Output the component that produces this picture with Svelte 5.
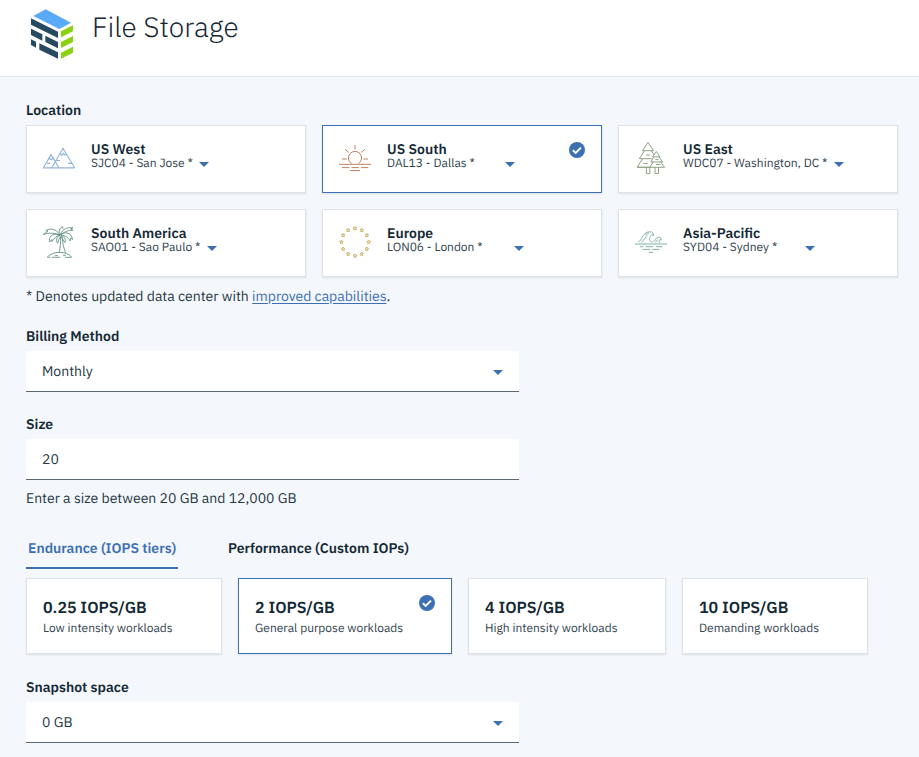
<script>
  const locations = [
    { name: 'US West', dc: 'SJC04 - San Jose *', icon: 'mountains', width: 108 },
    { name: 'US South', dc: 'DAL13 - Dallas *', icon: 'sun', width: 118, selected: true },
    { name: 'US East', dc: 'WDC07 - Washington, DC *', icon: 'trees', width: 151 },
    { name: 'South America', dc: 'SAO01 - Sao Paulo *', icon: 'palm', width: 116 },
    { name: 'Europe', dc: 'LON06 - London *', icon: 'stars', width: 127 },
    { name: 'Asia-Pacific', dc: 'SYD04 - Sydney *', icon: 'wave', width: 122 }
  ];
  const tiers = [
    { name: '0.25 IOPS/GB', text: 'Low intensity workloads', width: 196 },
    { name: '2 IOPS/GB', text: 'General purpose workloads', width: 214, selected: true },
    { name: '4 IOPS/GB', text: 'High intensity workloads', width: 198 },
    { name: '10 IOPS/GB', text: 'Demanding workloads', width: 186 }
  ];
  const stars = Array.from({ length: 12 }, (_, i) => {
    const a = (i * Math.PI) / 6;
    return { x: 16 + 13.7 * Math.sin(a), y: 15 - 13.7 * Math.cos(a) };
  });
</script>

{#snippet caret()}
  <svg class="caret" width="10" height="5" viewBox="0 0 10 5"><path d="M0 0h10L5 5z" /></svg>
{/snippet}

{#snippet check()}
  <svg class="check" width="16" height="16" viewBox="0 0 16 16">
    <circle cx="8" cy="8" r="8" />
    <path d="M3.9 8.2l2.8 2.7 5.3-5.3" />
  </svg>
{/snippet}

<div class="page">
  <header>
    <svg class="logo" width="45" height="52" viewBox="30 24 135 156">
      <path fill="#5aaafa" d="M77 28l76 40-35 19-78-39z" />
      <path fill="#264a60" d="M33 55l81 40v19L33 74zM33 86l34 17v19l-34-17zM76 107l38 19v19l-38-19zM33 118l15 7v18l-15-8zM58 130l56 27v19l-56-27z" />
      <path fill="#8cd211" d="M123 94l36-18v18l-36 18zM123 126l36-18v18l-36 18zM123 158l36-18v18l-36 18z" />
    </svg>
    <h1>File Storage</h1>
  </header>

  <main>
    <h2>Location</h2>
    <div class="locations">
      {#each locations as l}
        <div class="card location" class:selected={l.selected}>
          <svg class="icon {l.icon}" width="32" height="32" viewBox="0 0 32 32">
            {#if l.icon === 'mountains'}
              <path d="M.5 24.5L8 11.6l4 6.1M8.9 24.5L20 5.3l11.5 19.2M8 11.6l7.8 12.9M0 24.8h32M5.3 16.5l1.7-1.3 1.3 1.6 1.5-1.5 1.2.8M17.2 10.3l1.6 2 1.5-2 1.6 1.7 1.6-1M4 20.3h3M13 17.5h4M25 20.3h3.5" />
            {:else if l.icon === 'sun'}
              <path d="M0 21.3h32M3 24.6h7.3M12.5 24.6h7.3M22 24.6h7.3M11 27.6h10M16 2v4.5M6.2 6.4l3.5 3M25.8 6.4l-3.5 3M3 16h4.7M24.3 16H29" />
              <path d="M12.5 20.6a6.6 6.6 0 1 1 7 0" />
            {:else if l.icon === 'trees'}
              <path d="M13-.5L7.4 7.7h11.2zM9.6 7.7l-5.3 8h12.5M16.4 7.7l2.4 4M7.5 15.7L2.2 24.3h13.2M11.4 24.3v6.3h3.4v-6.3M2.2 24.3h27.4l-4.4-6M21.3 8.5l-3.7 5.4h7.2zM18.7 14l-2.9 5h11.8L24 14M18.2 19l-3.3 5.1M20 24.3v6.1h3.5v-6.1M11 12h4M8.5 20.5h4M20.5 16.6h3M21 21.5h4.5" />
            {:else if l.icon === 'palm'}
              <path d="M17.5 9.8c.3 5 .1 10-1.3 15.2M19.2 10c.4 6 1.4 11 3.4 15.7M17 8C13.5 1.5 6 .8 2.8 3.7L5 4.2.3 7.5C6 5.4 12 6 17 8zM17 8C9 5.5 5 10 6.8 15c1-1 1.4-1.8 2-2.5l.2 2C11 11.5 13 9 17 8zM17 8c-4 2-4 6-2.3 8.3C15.5 13 16.5 11 17.6 8.6M17.5 7.5C15 4.5 16.5 1 19.5-.3l.5 2M17.5 7.5C20 1 25 .3 30 .8L27.6 2l2.3 1.2C25 3 21.5 5 17.5 7.5zM17.7 8c4-4 11-2.5 11.8 4.5l-2-1.5-.3 3C25 10 22 8.5 17.7 8zM18 8.5c4 1 4.8 4 4 7-1.5-2-3-4-4-7M4.3 30.1c5-6.3 19.4-6.3 24.4 0M4.3 30.3h3M9 30.3h8M22 30.3h6.7M12 28.6h3M20 28.3h3" />
            {:else if l.icon === 'stars'}
              {#each stars as s}
                <path transform="translate({s.x} {s.y})" d="M0-1.8L.55-.6 1.8-.5.8.4 1.1 1.6 0 1-1.1 1.6-.8.4-1.8-.5-.55-.6z" />
              {/each}
            {:else}
              <path d="M0 17h32M5 19.7h3.5M10.7 19.7h7.6M21 19.7h6.5M7.5 22.4h7.5M17.3 22.4h7M13.7 25.3h4.5M3.2 15C7 14 7.5 4.8 15 4.8c2.5 0 3.8 1.7 3.5 4-1.8-2-3.2-.8-3 .8-2 1.4-1.2 5 2 5.8M6.5 15c3-1.5 4-5.5 6-7.2M10.5 7.5c1.3-1 2.3-1.2 3.5-1.2M18.2 14.8c2.3-.3 2-4.6 5.5-4.6 2 0 2.8 1.5 2.6 3-1-1-2-.7-2 .3-1 .5-.5 1.8.6 2.2M20.5 15.3c1.2-.8 1.2-1.8 2-2.8" />
            {/if}
          </svg>
          <div class="details">
            <strong>{l.name}</strong>
            <div class="dc"><span style="width: {l.width}px">{l.dc}</span>{@render caret()}</div>
          </div>
          {#if l.selected}{@render check()}{/if}
        </div>
      {/each}
    </div>
    <p class="note">* Denotes updated data center with <a href="#capabilities">improved capabilities</a>.</p>

    <h2 class="billing">Billing Method</h2>
    <div class="field"><span>Monthly</span>{@render caret()}</div>

    <h2 class="size">Size</h2>
    <div class="field"><span>20</span></div>
    <p class="helper">Enter a size between 20 GB and 12,000 GB</p>

    <nav>
      <button class="active">Endurance (IOPS tiers)</button>
      <button class="performance">Performance (Custom IOPs)</button>
    </nav>
    <div class="tiers">
      {#each tiers as t}
        <div class="card tier" class:selected={t.selected} style="width: {t.width}px">
          <div class="tier-text">
            <strong>{t.name}</strong>
            <p>{t.text}</p>
          </div>
          {#if t.selected}{@render check()}{/if}
        </div>
      {/each}
    </div>

    <h2 class="snapshot">Snapshot space</h2>
    <div class="field"><span>0 GB</span>{@render caret()}</div>
  </main>
</div>

<style>
  :global(body) { margin: 0; background: #f4f7fb; }
  .page {
    height: 757px;
    overflow: hidden;
    box-sizing: border-box;
    background: #f4f7fb;
    color: #152935;
    font-family: 'IBM Plex Sans', Roboto, 'Liberation Sans', sans-serif;
    font-size: 14px;
    white-space: nowrap;
    text-rendering: geometricPrecision;
  }
  * { box-sizing: border-box; }
  header {
    height: 77px;
    display: flex;
    align-items: flex-start;
    padding: 8px 30px 0;
    background: #fff;
    border-bottom: 1px solid #dfe6eb;
  }
  h1 { margin: 0 0 0 17px; font-size: 28px; line-height: 38px; font-weight: 300; }
  main { padding: 24px 21px 0 26px; }
  h2 { margin: 0 0 6px; font-size: 14px; line-height: 18px; font-weight: 600; }
  p { margin: 0; }
  .locations { display: grid; grid-template-columns: repeat(3, 280px); gap: 16px; }
  .card {
    display: flex;
    background: #fff;
    border: 1px solid #dfe3e6;
    box-shadow: 0 1px 2px rgba(0, 0, 0, 0.1);
  }
  .card.selected { border-color: #3d70b2; }
  .location { height: 68px; padding: 16px; align-items: flex-start; }
  .icon { flex: none; margin-top: 1px; overflow: visible; fill: none; stroke-width: 1; }
  .mountains { stroke: #94b5da; stroke-width: 1.15; }
  .sun { stroke: #c2805f; }
  .trees { stroke: #8fa284; }
  .palm { stroke: #5d8c83; stroke-width: 0.85; }
  .stars { stroke: #c9b062; }
  .wave { stroke: #86afa8; }
  .details { margin-left: 16px; }
  .details strong { display: block; line-height: 15px; font-weight: 600; }
  .dc { display: flex; align-items: center; height: 14px; font-size: 12px; line-height: 16px; font-weight: 400; }
  .dc span { color: #33444f; }
  .caret { flex: none; fill: #3d70b2; }
  .dc .caret { margin-top: 1px; }
  .check { flex: none; margin-left: auto; }
  .check circle { fill: #3d70b2; }
  .check path { fill: none; stroke: #fff; stroke-width: 2; }
  .note { margin-top: 10px; line-height: 18px; color: #253843; }
  a { color: #3d70b2; text-decoration: underline; text-underline-offset: 2px; }
  .billing { margin-top: 22px; }
  .field {
    display: flex;
    align-items: center;
    justify-content: space-between;
    width: 493px;
    height: 41px;
    padding: 0 16px;
    background: #fff;
    border-bottom: 1px solid #5a6872;
    color: #253843;
  }
  .field .caret { margin-top: 2px; }
  .size { margin-top: 23px; }
  .helper { margin-top: 9px; line-height: 18px; color: #253843; }
  nav { display: flex; height: 42px; margin-top: 20px; }
  button {
    padding: 0 2px;
    border: 0;
    background: none;
    color: #152935;
    font: 600 14px/18px 'IBM Plex Sans', Roboto, 'Liberation Sans', sans-serif;
    text-rendering: inherit;
    text-align: left;
  }
  .active { width: 152px; border-bottom: 2px solid #3d70b2; color: #3d70b2; padding-top: 2px; }
  .performance { margin-left: 48px; }
  .tiers { display: flex; gap: 16px; margin-top: 9px; }
  .tier { height: 76px; padding: 16px; }
  .tier-text { padding-top: 1px; }
  .tier strong { display: block; font-size: 16px; line-height: 24px; font-weight: 600; }
  .tier p { font-size: 12px; line-height: 18px; color: #33444f; }
  .snapshot { margin-top: 24px; }
</style>
